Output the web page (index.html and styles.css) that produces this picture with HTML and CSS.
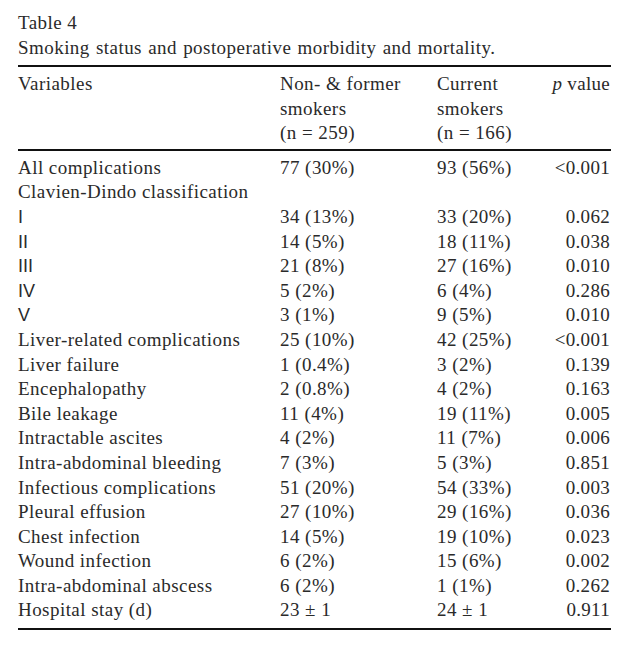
FILE: index.html
```html
<!DOCTYPE html>
<html lang="en">
<head>
<meta charset="utf-8">
<title>Table 4</title>
<link rel="stylesheet" href="styles.css">
</head>
<body>
<div class="page">
  <div class="caption">
    <div class="label">Table 4</div>
    <div class="title">Smoking status and postoperative morbidity and mortality.</div>
  </div>
  <table class="data">
    <colgroup>
      <col class="c1"><col class="c2"><col class="c3"><col class="c4">
    </colgroup>
    <thead>
      <tr>
        <th>Variables</th>
        <th>Non- &amp; former<br>smokers<br>(n = 259)</th>
        <th>Current<br>smokers<br>(n = 166)</th>
        <th class="num"><i>p</i> value</th>
      </tr>
    </thead>
    <tbody>
      <tr><td>All complications</td><td>77 (30%)</td><td>93 (56%)</td><td class="num">&lt;0.001</td></tr>
      <tr><td>Clavien-Dindo classification</td><td></td><td></td><td class="num"></td></tr>
      <tr><td class="roman">I</td><td>34 (13%)</td><td>33 (20%)</td><td class="num">0.062</td></tr>
      <tr><td class="roman">II</td><td>14 (5%)</td><td>18 (11%)</td><td class="num">0.038</td></tr>
      <tr><td class="roman">III</td><td>21 (8%)</td><td>27 (16%)</td><td class="num">0.010</td></tr>
      <tr><td class="roman">IV</td><td>5 (2%)</td><td>6 (4%)</td><td class="num">0.286</td></tr>
      <tr><td class="roman">V</td><td>3 (1%)</td><td>9 (5%)</td><td class="num">0.010</td></tr>
      <tr><td>Liver-related complications</td><td>25 (10%)</td><td>42 (25%)</td><td class="num">&lt;0.001</td></tr>
      <tr><td>Liver failure</td><td>1 (0.4%)</td><td>3 (2%)</td><td class="num">0.139</td></tr>
      <tr><td>Encephalopathy</td><td>2 (0.8%)</td><td>4 (2%)</td><td class="num">0.163</td></tr>
      <tr><td>Bile leakage</td><td>11 (4%)</td><td>19 (11%)</td><td class="num">0.005</td></tr>
      <tr><td>Intractable ascites</td><td>4 (2%)</td><td>11 (7%)</td><td class="num">0.006</td></tr>
      <tr><td>Intra-abdominal bleeding</td><td>7 (3%)</td><td>5 (3%)</td><td class="num">0.851</td></tr>
      <tr><td>Infectious complications</td><td>51 (20%)</td><td>54 (33%)</td><td class="num">0.003</td></tr>
      <tr><td>Pleural effusion</td><td>27 (10%)</td><td>29 (16%)</td><td class="num">0.036</td></tr>
      <tr><td>Chest infection</td><td>14 (5%)</td><td>19 (10%)</td><td class="num">0.023</td></tr>
      <tr><td>Wound infection</td><td>6 (2%)</td><td>15 (6%)</td><td class="num">0.002</td></tr>
      <tr><td>Intra-abdominal abscess</td><td>6 (2%)</td><td>1 (1%)</td><td class="num">0.262</td></tr>
      <tr><td>Hospital stay (d)</td><td>23 ± 1</td><td>24 ± 1</td><td class="num">0.911</td></tr>
    </tbody>
  </table>
</div>
</body>
</html>
```
FILE: styles.css
```css
html, body {
  margin: 0;
  padding: 0;
  background: #ffffff;
}

.page {
  padding: 10px 0 0 18px;
  font-family: "Liberation Serif", "Times New Roman", serif;
  font-size: 19px;
  letter-spacing: 0.45px;
  color: #2a2a2a;
}

.caption {
  line-height: 25px;
  margin-bottom: 5px;
}

.title {
  word-spacing: 1px;
}

.data {
  border-collapse: collapse;
  table-layout: fixed;
  width: 593px;
  line-height: 24.6px;
}

.c1 { width: 262px; }
.c2 { width: 157px; }
.c3 { width: 100px; }
.c4 { width: 74px; }

.data th,
.data td {
  padding: 0;
  text-align: left;
  font-weight: normal;
  vertical-align: top;
  white-space: nowrap;
}

.data th.num,
.data td.num {
  text-align: right;
  padding-right: 1px;
  letter-spacing: 0.3px;
}

.data thead tr {
  border-top: 2px solid #111;
  border-bottom: 2px solid #111;
}

.data thead th {
  padding-top: 5px;
  padding-bottom: 3px;
}

.data tbody {
  border-bottom: 2px solid #111;
}

.data tbody tr:first-child td {
  padding-top: 5px;
}

.data tbody tr:last-child td {
  padding-bottom: 5px;
}

.data td.roman {
  font-family: "Liberation Sans", Arial, sans-serif;
  font-size: 18px;
  letter-spacing: 0;
}
```
